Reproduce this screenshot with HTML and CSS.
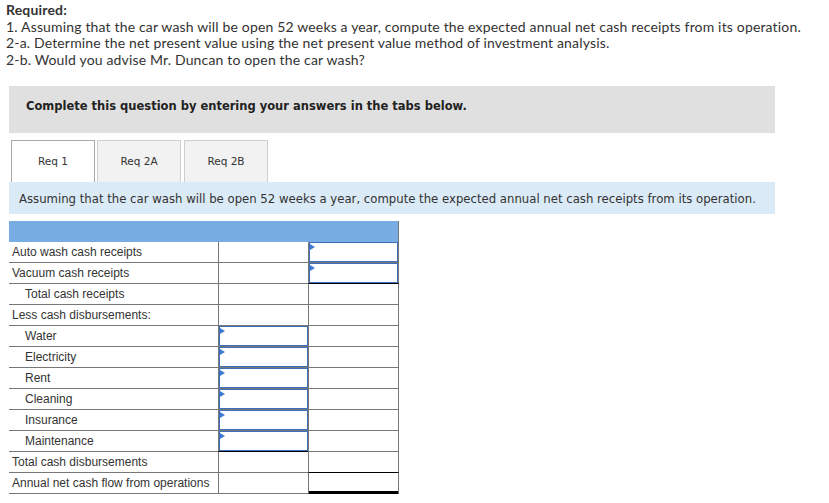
FILE: index.html
```html
<!DOCTYPE html>
<html>
<head>
<meta charset="utf-8">
<link rel="stylesheet" href="styles.css">
</head>
<body>
<div class="required">
  <div class="req-title">Required:</div>
  <div>1. Assuming that the car wash will be open 52 weeks a year, compute the expected annual net cash receipts from its operation.</div>
  <div>2-a. Determine the net present value using the net present value method of investment analysis.</div>
  <div>2-b. Would you advise Mr. Duncan to open the car wash?</div>
</div>
<div class="panel">
  <div class="instruction">Complete this question by entering your answers in the tabs below.</div>
  <div class="tabs">
    <div class="tab active">Req 1</div>
    <div class="tab">Req 2A</div>
    <div class="tab">Req 2B</div>
  </div>
  <div class="prompt">Assuming that the car wash will be open 52 weeks a year, compute the expected annual net cash receipts from its operation.</div>
</div>
<table class="grid">
  <colgroup><col class="c1"><col class="c2"><col class="c3"></colgroup>
  <tr class="head"><td colspan="3"><div class="hd"></div></td></tr>
  <tr><td class="lbl">Auto wash cash receipts</td><td></td><td><div class="inp"></div></td></tr>
  <tr><td class="lbl">Vacuum cash receipts</td><td></td><td class="bot-black"><div class="inp"></div></td></tr>
  <tr><td class="lbl ind">Total cash receipts</td><td></td><td></td></tr>
  <tr><td class="lbl">Less cash disbursements:</td><td></td><td></td></tr>
  <tr><td class="lbl ind">Water</td><td><div class="inp"></div></td><td></td></tr>
  <tr><td class="lbl ind">Electricity</td><td><div class="inp"></div></td><td></td></tr>
  <tr><td class="lbl ind">Rent</td><td><div class="inp"></div></td><td></td></tr>
  <tr><td class="lbl ind">Cleaning</td><td><div class="inp"></div></td><td></td></tr>
  <tr><td class="lbl ind">Insurance</td><td><div class="inp"></div></td><td></td></tr>
  <tr><td class="lbl ind">Maintenance</td><td class="bot-black"><div class="inp"></div></td><td></td></tr>
  <tr><td class="lbl">Total cash disbursements</td><td></td><td class="bot-black"></td></tr>
  <tr><td class="lbl">Annual net cash flow from operations</td><td></td><td class="total"></td></tr>
</table>
</body>
</html>
```
FILE: styles.css
```css
html, body {
  margin: 0;
  padding: 0;
  background: #fff;
}
.required {
  padding: 2px 6px 0 6px;
  font-family: Lato, "Liberation Sans", sans-serif;
  font-size: 14px;
  letter-spacing: 0.16px;
  line-height: 16.5px;
  color: #333;
}
.req-title {
  font-weight: bold;
}
.panel {
  margin: 18px 0 0 9px;
  width: 766px;
  font-family: "DejaVu Sans", Verdana, sans-serif;
  color: #222;
}
.instruction {
  background: #e0e0e0;
  height: 47px;
  box-sizing: border-box;
  padding: 12px 0 0 17px;
  font-size: 11.5px;
  line-height: 16px;
  font-weight: bold;
}
.tabs {
  display: flex;
  gap: 2px;
  margin: 7px 0 0 2px;
}
.tab {
  width: 84px;
  height: 42px;
  box-sizing: border-box;
  border: 1px solid #cfcfcf;
  border-bottom: none;
  background: #f2f2f2;
  font-size: 10.5px;
  line-height: 40px;
  text-align: center;
  color: #333;
}
.tab:nth-child(3) { margin-left: 1px; }
.tab.active {
  background: #fff;
  border-color: #a9a9a9;
}
.prompt {
  background: #dbeaf7;
  height: 32px;
  box-sizing: border-box;
  padding: 9px 0 0 10px;
  font-size: 11.7px;
  line-height: 16px;
  color: #333;
}
.grid {
  margin: 7px 0 0 9px;
  border-collapse: separate;
  border-spacing: 0;
  table-layout: fixed;
  width: 390px;
  font-family: "Liberation Sans", Arial, sans-serif;
  font-size: 12px;
  color: #333;
}
.c1 { width: 209px; }
.c2 { width: 90px; }
.c3 { width: 91px; }
.grid td {
  padding: 0;
  line-height: 20px;
  border-bottom: 1px solid #777;
  border-left: 1px solid #777;
  vertical-align: top;
}
.grid td:last-child {
  border-right: 1px solid #777;
}
.grid td.lbl {
  border-left: none;
  padding-left: 3px;
  white-space: nowrap;
}
.grid td.lbl.ind {
  padding-left: 16px;
}
.grid tr.head td {
  background: #78ade4;
  border-left: none;
  border-bottom: none;
}
.hd {
  height: 21px;
}
.grid td.bot-black {
  border-bottom-color: #000;
}
.grid td.total {
  border-bottom-color: #000;
  box-shadow: inset 0 -2px 0 #000;
}
.inp {
  position: relative;
  height: 20px;
  box-sizing: border-box;
  border: 1px solid #3d70b8;
}
.inp::before {
  content: "";
  position: absolute;
  left: 0;
  top: 1px;
  border-left: 5px solid #3d7ad6;
  border-top: 3px solid transparent;
  border-bottom: 3px solid transparent;
}
```
